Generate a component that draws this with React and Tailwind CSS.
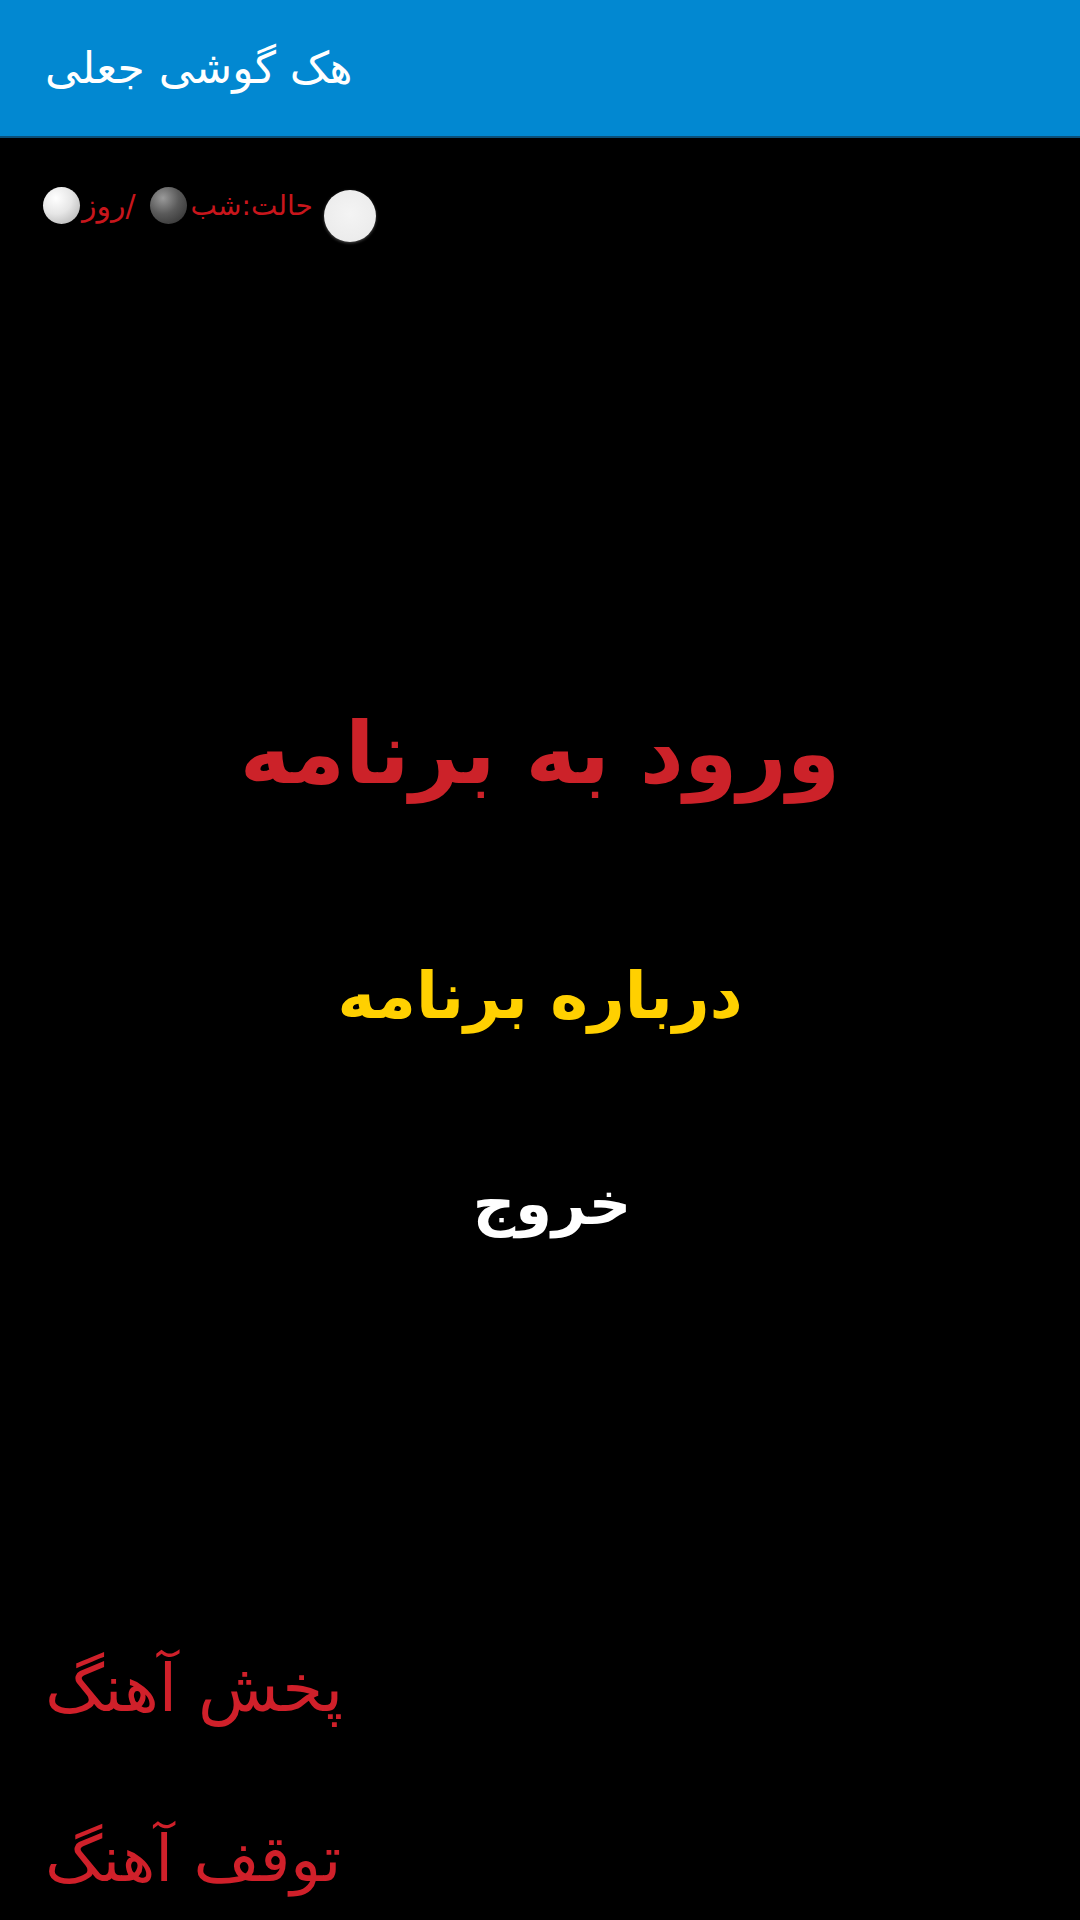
import React from "react";

function Sphere({ dark = false }) {
  return (
    <span
      className={
        "inline-block rounded-full shrink-0 w-[37px] h-[37px] " +
        (dark
          ? "bg-[radial-gradient(circle_at_35%_30%,#9a9a9a_0%,#5a5a5a_45%,#2a2a2a_100%)]"
          : "bg-[radial-gradient(circle_at_35%_30%,#ffffff_0%,#e6e6e6_45%,#a8a8a8_100%)]")
      }
    />
  );
}

export default function App() {
  return (
    <div className="w-[1080px] h-[1920px] bg-black flex flex-col overflow-hidden font-['DejaVu_Sans',sans-serif]">
      <header className="h-[138px] bg-[#0288d1] border-b-2 border-[#0b4f78] flex items-center px-[45px] shrink-0">
        <h1 dir="rtl" className="text-[44px] text-white leading-none">
          هک گوشی جعلی
        </h1>
      </header>

      <div className="mt-[49px] flex items-start px-[43px]">
        <Sphere />
        <span dir="rtl" className="h-[37px] flex items-center text-[30px] text-[#c8161c] leading-none ml-[2px]">
          /روز
        </span>
        <span className="w-[14px]" />
        <Sphere dark />
        <span dir="rtl" className="h-[37px] flex items-center text-[28px] text-[#c8161c] leading-none ml-[4px]">
          حالت:شب
        </span>
        <span className="ml-[11px] mt-[3px] w-[52px] h-[52px] rounded-full bg-[radial-gradient(circle_at_50%_45%,#f4f4f4_0%,#ececec_70%,#cfcfcf_100%)] shadow-[0_1px_3px_rgba(255,255,255,0.3)]" />
      </div>

      <div className="mt-[451px] h-[120px] flex items-center justify-center">
        <span dir="rtl" className="text-[86px] font-bold text-[#cc2229] leading-none">
          ورود به برنامه
        </span>
      </div>

      <div className="mt-[143px] h-[80px] flex items-center justify-center">
        <span dir="rtl" className="text-[64px] font-bold text-[#ffd000] leading-none">
          درباره برنامه
        </span>
      </div>

      <div className="mt-[127px] h-[80px] flex items-center justify-center pl-[24px]">
        <span dir="rtl" className="text-[59px] font-bold text-white leading-none">
          خروج
        </span>
      </div>

      <div className="mt-[406px] h-[80px] flex items-center px-[45px]">
        <span dir="rtl" className="text-[66px] text-[#d0202a] leading-none">
          پخش آهنگ
        </span>
      </div>

      <div className="mt-[90px] h-[80px] flex items-center px-[45px]">
        <span dir="rtl" className="text-[64px] text-[#d0202a] leading-none">
          توقف آهنگ
        </span>
      </div>
    </div>
  );
}
